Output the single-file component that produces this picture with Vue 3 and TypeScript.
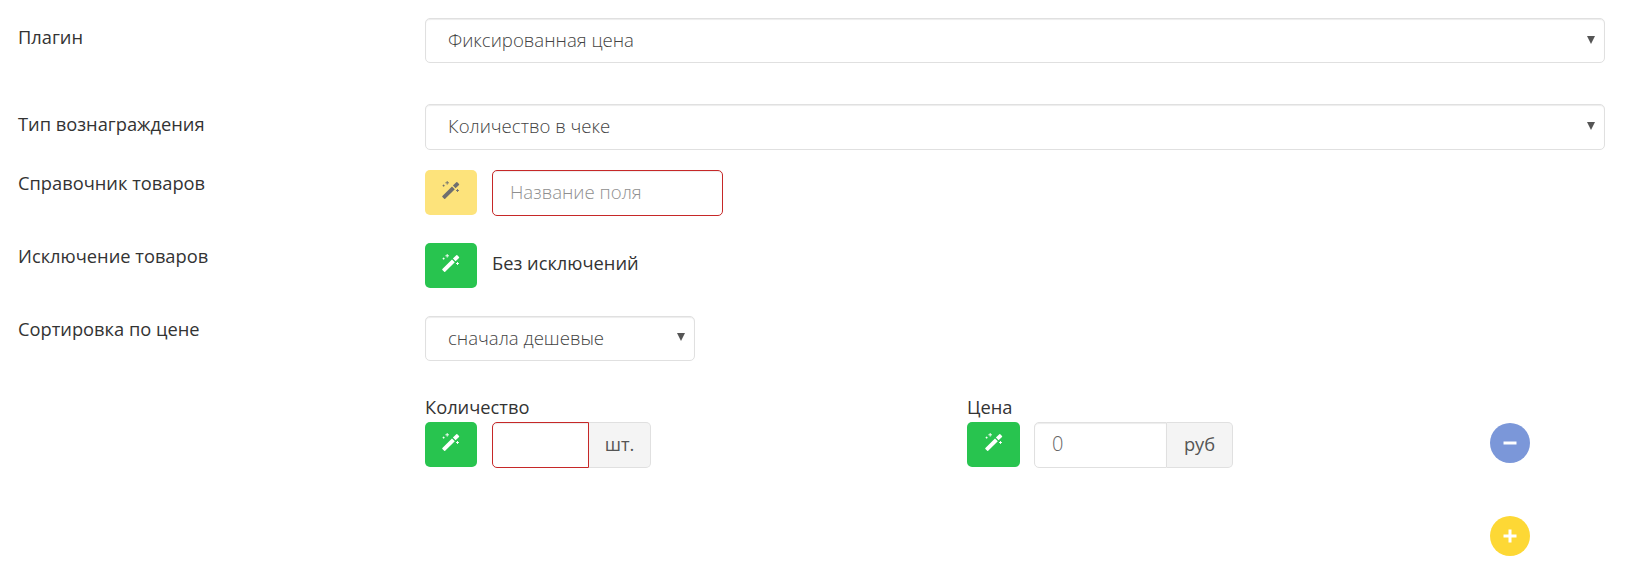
<script setup lang="ts">
const wand = 'M0.4 15 L10 5.4 L12.8 8.2 L3.2 17.8 Q2.7 18.2 2.2 17.8 L0.4 16 Q0 15.5 0.4 15 Z M10.9 4.6 L14.3 1.2 Q14.8 .8 15.3 1.2 L17 2.9 Q17.4 3.4 17 3.9 L13.6 7.3 Z'
const sparkles = 'M5.2 0v3.6M3.4 1.8h3.6M1.6 3.6v2M.6 4.6h2M15.5 8v3M14 9.5h3'
</script>

<template>
  <form class="form" @submit.prevent>
    <div class="row row-plugin">
      <label class="label">Плагин</label>
      <div class="select-wrap full">
        <select class="control">
          <option>Фиксированная цена</option>
        </select>
      </div>
    </div>

    <div class="row row-type">
      <label class="label">Тип вознаграждения</label>
      <div class="select-wrap full tall">
        <select class="control">
          <option>Количество в чеке</option>
        </select>
      </div>
    </div>

    <div class="row row-catalog">
      <label class="label">Справочник товаров</label>
      <div class="inline">
        <button type="button" class="wand wand-yellow">
          <svg width="18" height="18" viewBox="0 0 18 18">
            <path :d="wand" fill="#6f6f6f" />
            <path :d="sparkles" stroke="#6f6f6f" stroke-width=".9" fill="none" />
          </svg>
        </button>
        <input class="control name-input invalid" placeholder="Название поля" />
      </div>
    </div>

    <div class="row row-exclude">
      <label class="label">Исключение товаров</label>
      <div class="inline">
        <button type="button" class="wand wand-green">
          <svg width="18" height="18" viewBox="0 0 18 18">
            <path :d="wand" fill="#fff" />
            <path :d="sparkles" stroke="#fff" stroke-width=".9" fill="none" />
          </svg>
        </button>
        <span class="value">Без исключений</span>
      </div>
    </div>

    <div class="row row-sort">
      <label class="label">Сортировка по цене</label>
      <div class="select-wrap short">
        <select class="control">
          <option>сначала дешевые</option>
        </select>
      </div>
    </div>

    <div class="row row-values">
      <div class="spacer"></div>
      <div class="values">
        <div class="field field-qty">
          <div class="field-title">Количество</div>
          <div class="inline">
            <button type="button" class="wand wand-green">
              <svg width="18" height="18" viewBox="0 0 18 18">
                <path :d="wand" fill="#fff" />
                <path :d="sparkles" stroke="#fff" stroke-width=".9" fill="none" />
              </svg>
            </button>
            <div class="group">
              <input class="control group-input qty-input invalid" />
              <span class="addon addon-qty">шт.</span>
            </div>
          </div>
        </div>
        <div class="field field-price">
          <div class="field-title">Цена</div>
          <div class="inline inline-price">
            <button type="button" class="wand wand-green wand-wide">
              <svg width="18" height="18" viewBox="0 0 18 18">
                <path :d="wand" fill="#fff" />
                <path :d="sparkles" stroke="#fff" stroke-width=".9" fill="none" />
              </svg>
            </button>
            <div class="group">
              <input class="control group-input price-input" placeholder="0" />
              <span class="addon addon-price">руб</span>
            </div>
          </div>
        </div>
        <button type="button" class="round round-minus">
          <svg width="14" height="14" viewBox="0 0 14 14"><path d="M0.5 7h13" stroke="#fff" stroke-width="3" /></svg>
        </button>
      </div>
    </div>

    <div class="add-line">
      <button type="button" class="round round-plus">
        <svg width="14" height="14" viewBox="0 0 14 14"><path d="M0.5 7h13M7 0.5v13" stroke="#fff" stroke-width="3" /></svg>
      </button>
    </div>
  </form>
</template>

<style>
html, body { background: #fff; }
</style>

<style scoped>
.form {
  box-sizing: border-box;
  width: 1625px;
  height: 570px;
  padding: 18px 20px 0 18px;
  font-family: "Open Sans", "Noto Sans", sans-serif;
  font-size: 18.3px;
  color: #333;
  background: #fff;
  overflow: hidden;
}
.row { display: flex; align-items: flex-start; }
.label, .spacer { flex: 0 0 407px; line-height: 22px; color: #333; }
.row-plugin .label { margin-top: 8px; }
.row-type { margin-top: 41px; }
.row-type .label { margin-top: 9px; }
.row-catalog { margin-top: 20px; }
.row-catalog .label { margin-top: 2px; }
.row-exclude { margin-top: 27px; }
.row-exclude .label { margin-top: 2px; }
.row-sort { margin-top: 28px; }
.row-sort .label { margin-top: 2px; }
.row-values { margin-top: 36px; }

.select-wrap { position: relative; height: 45px; }
.select-wrap.tall { height: 46px; }
.select-wrap.tall .control { height: 46px; padding-bottom: 4px; }
.select-wrap.full { width: 1180px; }
.select-wrap.short { width: 270px; }
.select-wrap::after {
  content: "";
  position: absolute;
  top: 18px;
  right: 10px;
  border-left: 4px solid transparent;
  border-right: 4px solid transparent;
  border-top: 8px solid #555;
  pointer-events: none;
}
.select-wrap.short::after { top: 17px; }
.control {
  box-sizing: border-box;
  height: 45px;
  border: 1px solid #e0e0e0;
  border-radius: 5px;
  background: #fff;
  box-shadow: inset 0 1px 1px rgba(0, 0, 0, .075);
  font: inherit;
  font-size: 18.6px;
  font-weight: 300;
  color: #444;
  outline: none;
}
select.control {
  width: 100%;
  padding: 0 30px 2px 22px;
  appearance: none;
}
.inline { display: flex; align-items: center; gap: 15px; }
.inline-price { gap: 14px; }
.wand {
  display: flex;
  align-items: center;
  justify-content: center;
  width: 52px;
  height: 45px;
  padding: 0 0 5px;
  border: 0;
  border-radius: 5px;
  align-self: flex-start;
}
.wand-wide { width: 53px; }
.wand-yellow { background: #fde37b; }
.wand-green { background: #28c44f; }
.value { color: #333; padding-bottom: 7px; }
.name-input { width: 231px; height: 46px; padding: 0 17px 3px; }
.invalid { border-color: #c62828; }
input::placeholder { color: #8f8f8f; opacity: 1; }
.price-input { font-size: 20px; }
.price-input::placeholder { color: #666; }

.values { display: flex; position: relative; flex: 1; }
.field-title { line-height: 20px; margin-bottom: 5px; color: #333; }
.field-qty { width: 542px; }
.group { display: flex; }
.group-input { height: 46px; border-radius: 5px 0 0 5px; padding: 0 17px 3px; }
.qty-input { width: 97px; }
.price-input { width: 133px; }
.addon {
  box-sizing: border-box;
  display: flex;
  align-items: center;
  justify-content: center;
  height: 46px;
  padding-bottom: 3px;
  border: 1px solid #e0e0e0;
  border-left: 0;
  border-radius: 0 5px 5px 0;
  background: #f4f4f4;
  color: #555;
}
.addon-qty { width: 62px; }
.addon-price { width: 66px; }
.round {
  display: flex;
  align-items: center;
  justify-content: center;
  width: 40px;
  height: 40px;
  padding: 0;
  border: 0;
  border-radius: 50%;
}
.round-minus { position: absolute; left: 1065px; top: 26px; background: #7b97d9; }
.round-plus { background: #fdd835; }
.add-line { display: flex; justify-content: flex-end; padding-right: 75px; margin-top: 48px; }
</style>
